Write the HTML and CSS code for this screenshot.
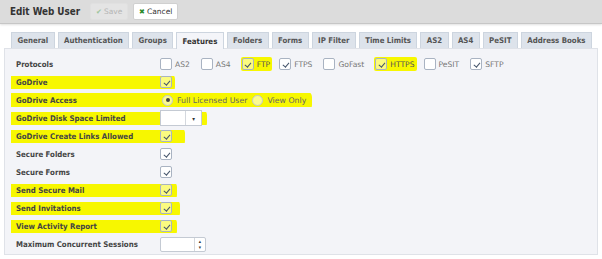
FILE: index.html
```html
<!DOCTYPE html>
<html>
<head>
<meta charset="utf-8">
<link rel="stylesheet" href="styles.css">
</head>
<body>
<div class="header">
  <span class="title">Edit Web User</span>
  <span class="btn btn-save"><span class="ck">&#10004;</span> Save</span>
  <span class="btn btn-cancel"><span class="x">&#10006;</span> Cancel</span>
</div>
<div class="tabs">
  <span class="tab">General</span>
  <span class="tab">Authentication</span>
  <span class="tab">Groups</span>
  <span class="tab active">Features</span>
  <span class="tab">Folders</span>
  <span class="tab">Forms</span>
  <span class="tab">IP Filter</span>
  <span class="tab">Time Limits</span>
  <span class="tab">AS2</span>
  <span class="tab">AS4</span>
  <span class="tab">PeSIT</span>
  <span class="tab">Address Books</span>
</div>
<div class="panel">
  <div class="row">
    <span class="label">Protocols</span>
    <div class="protos">
      <span class="opt"><span class="cb"></span>AS2</span>
      <span class="opt"><span class="cb"></span>AS4</span>
      <span class="opt hl-inline"><span class="cb on"></span>FTP</span>
      <span class="opt"><span class="cb on"></span>FTPS</span>
      <span class="opt"><span class="cb"></span>GoFast</span>
      <span class="opt hl-inline"><span class="cb on"></span>HTTPS</span>
      <span class="opt"><span class="cb"></span>PeSIT</span>
      <span class="opt"><span class="cb on"></span>SFTP</span>
    </div>
  </div>
  <div class="row hl hl-a">
    <span class="label">GoDrive</span>
    <span class="cb on"></span>
  </div>
  <div class="row hl hl-b">
    <span class="label">GoDrive Access</span>
    <span class="radio sel"></span><span class="rtext">Full Licensed User</span>
    <span class="radio"></span><span class="rtext">View Only</span>
  </div>
  <div class="row hl hl-c">
    <span class="label">GoDrive Disk Space Limited</span>
    <span class="select"><span class="sel-field"></span><span class="sel-arrow">&#9662;</span></span>
  </div>
  <div class="row hl hl-d">
    <span class="label">GoDrive Create Links Allowed</span>
    <span class="cb on"></span>
  </div>
  <div class="row">
    <span class="label">Secure Folders</span>
    <span class="cb on"></span>
  </div>
  <div class="row">
    <span class="label">Secure Forms</span>
    <span class="cb on"></span>
  </div>
  <div class="row hl hl-e">
    <span class="label">Send Secure Mail</span>
    <span class="cb on"></span>
  </div>
  <div class="row hl hl-f">
    <span class="label">Send Invitations</span>
    <span class="cb on"></span>
  </div>
  <div class="row hl hl-g">
    <span class="label">View Activity Report</span>
    <span class="cb on"></span>
  </div>
  <div class="row">
    <span class="label">Maximum Concurrent Sessions</span>
    <span class="spin"><span class="spin-field"></span><span class="spin-btns"><span>&#9652;</span><span>&#9662;</span></span></span>
  </div>
</div>
</body>
</html>
```
FILE: styles.css
```css
* { box-sizing: border-box; }
html, body { margin: 0; padding: 0; background: #fff; }
body {
  width: 602px;
  height: 259px;
  overflow: hidden;
  font-family: "DejaVu Sans Condensed", "DejaVu Sans", sans-serif;
  font-size: 7.8px;
  color: #444;
}
.header {
  height: 24px;
  background: #dcdcdc;
  border-bottom: 1px solid #c6c6c6;
  box-shadow: 0 1px 2px rgba(0,0,0,0.12);
  display: flex;
  align-items: center;
  padding-left: 10px;
}
.title {
  font-weight: bold;
  font-size: 9.8px;
  color: #333;
  margin-right: 10px;
}
.btn {
  height: 17px;
  display: inline-flex;
  align-items: center;
  padding: 0 5px 0 5px;
  border: 1px solid #d0d0d0;
  border-radius: 2px;
  font-family: "DejaVu Sans", sans-serif;
  font-size: 7.5px;
  margin-right: 5px;
  gap: 2px;
}
.btn-save { background: #e4e4e4; color: #b5b5b5; border-color: #e0e0e0; width: 38px; }
.btn-save .ck { color: #9cc49c; font-size: 7px; }
.btn-cancel { background: #fff; color: #333; width: 45px; }
.btn-cancel .x { color: #2a8a2a; font-size: 7px; font-weight: bold; }
.tabs {
  display: flex;
  gap: 3px;
  padding: 0 0 0 11px;
  height: 24px;
  align-items: flex-end;
}
.tab {
  height: 16px;
  display: inline-flex;
  align-items: center;
  padding: 0 5.4px;
  background: #dde3eb;
  border: 1px solid #cdd5df;
  border-bottom: none;
  font-weight: bold;
  color: #555;
  white-space: nowrap;
}
.tab.active { background: #f4f5f9; color: #333; height: 17px; position: relative; top: 1px; }
.panel {
  margin: 0 4px 0 4px;
  height: 207px;
  background: #f3f4f8;
  border: 1px solid #dfe2e8;
  padding: 6px 0 0 9px;
}
.row {
  display: flex;
  align-items: center;
  height: 18px;
  width: fit-content;
  padding-left: 2px;
}
.label {
  width: 144px;
  flex: none;
  font-weight: bold;
  color: #444;
  white-space: nowrap;
}
.hl {
  background: linear-gradient(#f7f700, #f7f700) no-repeat;
  background-size: 100% 13px;
  background-position: 0 55%;
  border-radius: 3px 6px 4px 2px;
  padding-right: 3px;
  margin-left: -3px;
  padding-left: 5px;
}
.hl-b { padding-right: 3px; background-size: 100% 14px; }
.hl-c { padding-right: 5px; }
.hl-d { padding-right: 13px; }
.hl-e { padding-right: 5px; }
.hl-f { padding-right: 8px; }
.hl-g { padding-right: 5px; }
.protos { display: flex; align-items: center; }
.opt {
  display: inline-flex;
  align-items: center;
  font-family: "DejaVu Sans", sans-serif;
  font-size: 7.6px;
  color: #777;
  margin-right: 11px;
  gap: 3px;
}
.hl-inline { background: #f7f700; padding: 1px 2px 1px 1px; margin-left: -1px; margin-right: 7px; color: #555; border-radius: 2px; }
.cb {
  width: 12px;
  height: 12px;
  flex: none;
  background: #fff;
  border: 1px solid #a9b3c2;
  border-radius: 2px;
  position: relative;
}
.cb.on::after {
  content: "";
  position: absolute;
  left: 3.5px;
  top: 1.5px;
  width: 2.5px;
  height: 5px;
  border: solid #44546a;
  border-width: 0 1.5px 1.5px 0;
  transform: rotate(40deg);
}
.hl .cb, .hl-inline .cb { background: #fbfb80; }
.radio {
  width: 11px;
  height: 11px;
  border-radius: 50%;
  border: 1px solid #bfc6d0;
  background: #fbfb90;
  position: relative;
  flex: none;
  margin-left: 2px;
  margin-right: 4px;
}
.radio.sel::after {
  content: "";
  position: absolute;
  left: 2.5px; top: 2.5px;
  width: 4px; height: 4px;
  border-radius: 50%;
  background: #444;
}
.rtext {
  font-family: "DejaVu Sans", sans-serif;
  font-size: 7.8px;
  color: #666;
  margin-right: 3px;
}
.select {
  display: inline-flex;
  height: 16px;
  border: 1px solid #c4cad3;
  background: #fff;
}
.sel-field { width: 25px; border-right: 1px solid #d4d8de; }
.sel-arrow { width: 15px; font-size: 6px; color: #333; display: flex; align-items: center; justify-content: center; }
.spin {
  display: inline-flex;
  height: 15px;
  border: 1px solid #c4cad3;
  background: #fff;
  border-radius: 2px;
}
.spin-field { width: 34px; border-right: 1px solid #d4d8de; }
.spin-btns { width: 10px; display: flex; flex-direction: column; font-size: 5px; color: #333; align-items: center; justify-content: center; line-height: 6px; }
```
